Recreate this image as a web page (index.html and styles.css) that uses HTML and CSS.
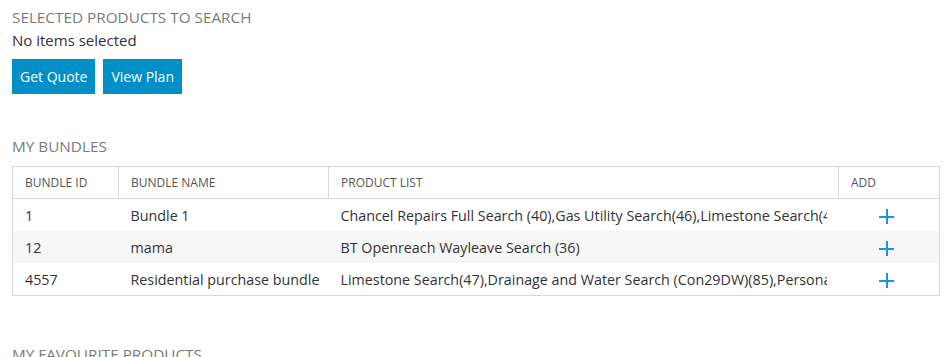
FILE: index.html
```html
<!DOCTYPE html>
<html lang="en">
<head>
  <meta charset="UTF-8" />
  <title>Search Products</title>
  <link rel="stylesheet" href="styles.css">
</head>
<body>
  <section class="block">
    <h3 class="block-title">Selected products to search</h3>
    <p class="empty-msg">No items selected</p>
    <div class="actions">
      <button type="button" class="btn">Get Quote</button>
      <button type="button" class="btn">View Plan</button>
    </div>
  </section>

  <section class="block bundles">
    <h3 class="block-title">My bundles</h3>
    <table class="grid">
      <colgroup>
        <col class="c-id">
        <col class="c-name">
        <col class="c-list">
        <col class="c-add">
      </colgroup>
      <thead>
        <tr>
          <th>Bundle ID</th>
          <th>Bundle Name</th>
          <th>Product List</th>
          <th>Add</th>
        </tr>
      </thead>
      <tbody>
        <tr>
          <td>1</td>
          <td>Bundle 1</td>
          <td><div class="clip">Chancel Repairs Full Search (40),Gas Utility Search(46),Limestone Search(47),Drainage and Water Search (Con29DW)(85)</div></td>
          <td class="add"><span class="plus"></span></td>
        </tr>
        <tr>
          <td>12</td>
          <td>mama</td>
          <td><div class="clip">BT Openreach Wayleave Search (36)</div></td>
          <td class="add"><span class="plus"></span></td>
        </tr>
        <tr>
          <td>4557</td>
          <td>Residential purchase bundle</td>
          <td><div class="clip">Limestone Search(47),Drainage and Water Search (Con29DW)(85),Personal Search(12)</div></td>
          <td class="add"><span class="plus"></span></td>
        </tr>
      </tbody>
    </table>
  </section>

  <section class="block favourites">
    <h3 class="block-title">My favourite products</h3>
  </section>
</body>
</html>
```

FILE: styles.css
```css
body {
  font-family: "Open Sans", "Noto Sans", sans-serif;
  margin: 0;
  padding: 8px 8px 0 12px;
  color: #333;
  background: #fff;
}

.block-title {
  margin: 0;
  font-size: 15.3px;
  font-weight: normal;
  text-transform: uppercase;
  color: #7a7a7a;
  line-height: 19px;
}

.empty-msg {
  margin: 3px 0 0;
  font-size: 15px;
  line-height: 20px;
  color: #333;
}

.actions {
  display: flex;
  gap: 8px;
  margin-top: 9px;
}

.btn {
  background: #0090c7;
  color: #fff;
  border: none;
  border-radius: 0;
  height: 35px;
  padding: 0 8px;
  font-family: inherit;
  font-size: 14px;
  cursor: pointer;
}

.bundles {
  margin-top: 43px;
}

.bundles .block-title {
  margin-bottom: 10px;
}

.grid {
  width: 928px;
  border-collapse: collapse;
  table-layout: fixed;
  border: 1px solid #d8d8d8;
  font-size: 14.3px;
}

.c-id { width: 106px; }
.c-name { width: 210px; }
.c-list { width: 510px; }

.grid th {
  text-align: left;
  font-size: 12px;
  font-weight: normal;
  text-transform: uppercase;
  color: #555;
  height: 31px;
  padding: 0 12px;
  border-left: 1px solid #d8d8d8;
  border-bottom: 1px solid #d8d8d8;
}

.grid th:first-child {
  border-left: none;
}

.grid td {
  height: 32px;
  padding: 0 12px;
  white-space: nowrap;
  color: #333;
}

.clip {
  overflow: hidden;
  white-space: nowrap;
}

.grid tbody tr:nth-child(even) td {
  background: #f7f7f7;
}

.grid td.add {
  text-align: center;
  padding: 0 16px 0 12px;
}

.plus {
  display: inline-block;
  position: relative;
  width: 15px;
  height: 15px;
  vertical-align: middle;
}

.plus::before,
.plus::after {
  content: "";
  position: absolute;
  background: #1b95d3;
}

.plus::before {
  left: 7px;
  top: 0;
  width: 2px;
  height: 15px;
}

.plus::after {
  left: 0;
  top: 7px;
  width: 15px;
  height: 2px;
}

.favourites {
  margin-top: 49px;
}
```
